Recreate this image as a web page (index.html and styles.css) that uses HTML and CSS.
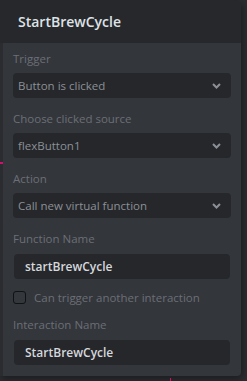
FILE: index.html
```html
<!DOCTYPE html>
<html lang="en">
<head>
    <meta charset="UTF-8">
    <meta name="viewport" content="width=device-width, initial-scale=1.0">
    <title>Interaction</title>
    <link rel="stylesheet" href="styles.css">
</head>
<body>
    <div class="wire wire-left"></div>
    <div class="wire wire-bottom"></div>
    <div id="panel">
        <div class="panel-header">StartBrewCycle</div>
        <div class="panel-body">
            <div class="field-label">Trigger</div>
            <div class="select">
                <span>Button is clicked</span>
                <svg class="chevron" width="9" height="6" viewBox="0 0 9 6"><path d="M1 1 L4.5 4.5 L8 1" fill="none" stroke="#8c9096" stroke-width="2"/></svg>
            </div>

            <div class="field-label">Choose clicked source</div>
            <div class="select">
                <span>flexButton1</span>
                <svg class="chevron" width="9" height="6" viewBox="0 0 9 6"><path d="M1 1 L4.5 4.5 L8 1" fill="none" stroke="#8c9096" stroke-width="2"/></svg>
            </div>

            <div class="field-label">Action</div>
            <div class="select">
                <span>Call new virtual function</span>
                <svg class="chevron" width="9" height="6" viewBox="0 0 9 6"><path d="M1 1 L4.5 4.5 L8 1" fill="none" stroke="#8c9096" stroke-width="2"/></svg>
            </div>

            <div class="field-label input-label">Function Name</div>
            <div class="text-input">startBrewCycle</div>

            <label class="check-row">
                <span class="checkbox"></span>
                <span>Can trigger another interaction</span>
            </label>

            <div class="field-label input-label">Interaction Name</div>
            <div class="text-input">StartBrewCycle</div>
        </div>
    </div>
</body>
</html>
```

FILE: styles.css
```css
body {
    font-family: "Open Sans", "Noto Sans", sans-serif;
    background-color: #2a2c30;
    margin: 0;
    padding: 0;
    width: 247px;
    height: 381px;
    overflow: hidden;
    position: relative;
}
#panel {
    width: 241px;
    box-shadow: 2px 3px 6px rgba(0,0,0,0.35);
    border-radius: 0 6px 6px 0;
}
.panel-header {
    background-color: #26282c;
    height: 43px;
    box-sizing: border-box;
    padding: 12px 0 0 18px;
    font-size: 14px;
    font-weight: 600;
    color: #dfe2e6;
    border-top-right-radius: 6px;
}
.panel-body {
    background-color: #33363b;
    margin-left: 3px;
    padding: 8px 10px 10px 10px;
    height: 333px;
    box-sizing: border-box;
    border-bottom-right-radius: 4px;
}
.field-label {
    font-size: 11.5px;
    color: #6b6f76;
    height: 16px;
    line-height: 16px;
    margin-bottom: 6px;
}
.input-label {
    margin-bottom: 7px;
}
.select {
    display: flex;
    align-items: center;
    justify-content: space-between;
    background-color: #25272b;
    border-radius: 4px;
    height: 25px;
    padding: 0 10px 0 5px;
    margin-bottom: 13px;
    font-size: 11.5px;
    color: #8c9096;
}
.chevron {
    display: block;
}
.text-input {
    background-color: #25272b;
    border-radius: 4px;
    height: 25px;
    line-height: 25px;
    margin: 0 1px 11px 1px;
    padding-left: 11px;
    font-size: 12px;
    font-weight: 600;
    color: #d5d8dc;
}
.check-row {
    display: flex;
    align-items: center;
    gap: 8px;
    height: 14px;
    margin-bottom: 13px;
    font-size: 11.5px;
    color: #6b6f76;
}
.checkbox {
    width: 11px;
    height: 11px;
    border: 1.5px solid #111214;
    border-radius: 3px;
    background-color: #34373c;
}
.wire {
    position: absolute;
    background-color: #d0106a;
}
.wire-left {
    left: 0;
    top: 162px;
    width: 3px;
    height: 2px;
}
.wire-bottom {
    left: 170px;
    top: 378px;
    width: 1px;
    height: 3px;
}
```
